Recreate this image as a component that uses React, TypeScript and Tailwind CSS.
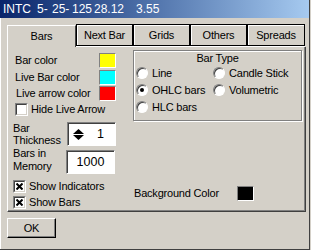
import React from "react";

const font = { fontFamily: '"Liberation Sans", Arial, sans-serif' };

function Swatch({ color }: { color: string }) {
  return (
    <div
      className="w-[17px] h-[15px] border border-t-[#808080] border-l-[#808080] border-b-white border-r-white"
      style={{ backgroundColor: color }}
    />
  );
}

function CheckBox({ checked }: { checked?: boolean }) {
  return (
    <div className="w-[13px] h-[13px] border border-t-[#808080] border-l-[#808080] border-b-white border-r-white">
      <div className="w-[11px] h-[11px] bg-white border border-t-[#404040] border-l-[#404040] border-b-[#d4d0c8] border-r-[#d4d0c8] flex items-center justify-center">
        {checked && (
          <svg width="7" height="7" viewBox="0 0 7 7">
            <path d="M0.5 0.5 L6.5 6.5 M6.5 0.5 L0.5 6.5" stroke="#000" strokeWidth="2" />
          </svg>
        )}
      </div>
    </div>
  );
}

function Radio({ checked, label }: { checked?: boolean; label: string }) {
  return (
    <div className="flex items-center h-[16px]">
      <div className="w-[12px] h-[12px] rounded-full bg-white border border-t-[#808080] border-l-[#808080] border-b-white border-r-white shadow-[inset_1px_1px_0_#404040] flex items-center justify-center">
        {checked && <div className="w-[4px] h-[4px] rounded-full bg-black" />}
      </div>
      <span className="ml-[4px]">{label}</span>
    </div>
  );
}

function Tab({ label, w }: { label: string; w: string }) {
  return (
    <div className={`flex flex-col ${w}`}>
      <div className="h-[22px] border border-black shadow-[inset_1px_1px_0_#fff] flex items-center justify-center pt-[1px]">
        {label}
      </div>
      <div className="h-[1px] bg-white" />
    </div>
  );
}

export default function App() {
  return (
    <div className="w-[311px] h-[250px] bg-[#d4d0c8] text-black text-[11px] tracking-[-0.2px]" style={font}>
      <div className="w-[310px] h-[250px] flex flex-col border-r border-b border-[#404040]">
        <div className="h-[18px] flex items-center pl-[3px] text-white text-[12px] tracking-normal bg-gradient-to-r from-[#0a246a] to-[#a6caf0] whitespace-pre">
          <span className="inline-block shrink-0 w-[34px]">INTC</span>
          <span className="inline-block shrink-0 w-[15px]">5-</span>
          <span className="inline-block shrink-0 w-[20px]">25-</span>
          <span className="inline-block shrink-0 w-[22px]">125</span>
          <span className="inline-block shrink-0 w-[42px]">28.12</span>
          <span className="inline-block shrink-0">3.55</span>
        </div>
        <div className="flex-1 flex flex-col pl-[6px] border-l border-white">
          <div className="flex h-[23px] mt-[6px]">
            <div className="self-end w-[69px] h-[22px] border-l border-t border-white border-r border-r-[#404040] flex items-center justify-center">
              Bars
            </div>
            <Tab label="Next Bar" w="w-[57px]" />
            <Tab label="Grids" w="w-[57px]" />
            <Tab label="Others" w="w-[57px]" />
            <Tab label="Spreads" w="w-[58px]" />
          </div>
          <div className="w-[299px] h-[165px] flex border-l border-white border-r border-b border-r-[#404040] border-b-[#404040] shadow-[inset_-1px_-1px_0_#808080]">
            <div className="w-[125px] flex flex-col pl-[7px] pt-[5px]">
              <div className="flex items-center h-[16px]">
                <span className="w-[84px]">Bar color</span>
                <Swatch color="#ffff00" />
              </div>
              <div className="flex items-center h-[16px] mt-[1px]">
                <span className="w-[84px]">Live Bar color</span>
                <Swatch color="#00ffff" />
              </div>
              <div className="flex items-center h-[16px]">
                <span className="w-[84px] pl-[1px]">Live arrow color</span>
                <Swatch color="#ff0000" />
              </div>
              <div className="flex items-center h-[13px] mt-[2px]">
                <CheckBox />
                <span className="ml-[3px]">Hide Live Arrow</span>
              </div>
              <div className="flex items-start mt-[6px] -ml-[2px]">
                <div className="w-[54px] leading-[12px]">
                  Bar
                  <br />
                  Thickness
                </div>
                <div className="w-[49px] h-[24px] bg-white border border-t-[#808080] border-l-[#808080] border-b-white border-r-white shadow-[inset_1px_1px_0_#404040] flex items-center">
                  <svg className="ml-[5px]" width="11" height="11" viewBox="0 0 11 11">
                    <path d="M0 5 L5.5 0 L11 5 Z" fill="#000" />
                    <path d="M0 6 L5.5 11 L11 6 Z" fill="#000" />
                  </svg>
                  <span className="ml-[13px] text-[12.5px] tracking-normal">1</span>
                </div>
              </div>
              <div className="flex items-start mt-[4px] -ml-[2px]">
                <div className="w-[53px] leading-[13px] -mt-[3px]">
                  Bars in
                  <br />
                  Memory
                </div>
                <div className="w-[49px] h-[24px] bg-white border border-t-[#808080] border-l-[#808080] border-b-white border-r-white shadow-[inset_1px_1px_0_#404040] flex items-center justify-center text-[12.5px] tracking-normal">
                  1000
                </div>
              </div>
              <div className="flex items-center h-[13px] mt-[6px] -ml-[2px]">
                <CheckBox checked />
                <span className="ml-[3px]">Show Indicators</span>
              </div>
              <div className="flex items-center h-[13px] mt-[3px] -ml-[2px]">
                <CheckBox checked />
                <span className="ml-[3px]">Show Bars</span>
              </div>
            </div>
            <div className="flex flex-col pt-[3px]">
              <div className="w-[169px] h-[71px] border border-[#808080] shadow-[inset_1px_1px_0_#fff,1px_1px_0_#fff] flex flex-col">
                <div className="h-[14px] leading-[14px] text-center">Bar Type</div>
                <div className="grid grid-cols-[77px_1fr] pl-[2px] gap-y-[1px]">
                  <Radio label="Line" />
                  <Radio label="Candle Stick" />
                  <Radio label="OHLC bars" checked />
                  <Radio label="Volumetric" />
                  <Radio label="HLC bars" />
                </div>
              </div>
              <div className="flex items-center h-[16px] mt-[64px] ml-[1px]">
                <span className="w-[103px]">Background Color</span>
                <Swatch color="#000000" />
              </div>
            </div>
          </div>
          <div className="mt-[6px] w-[49px] h-[20px] border border-t-white border-l-white border-r-black border-b-black shadow-[inset_-1px_-1px_0_#808080] flex items-center justify-center">
            OK
          </div>
        </div>
      </div>
    </div>
  );
}
